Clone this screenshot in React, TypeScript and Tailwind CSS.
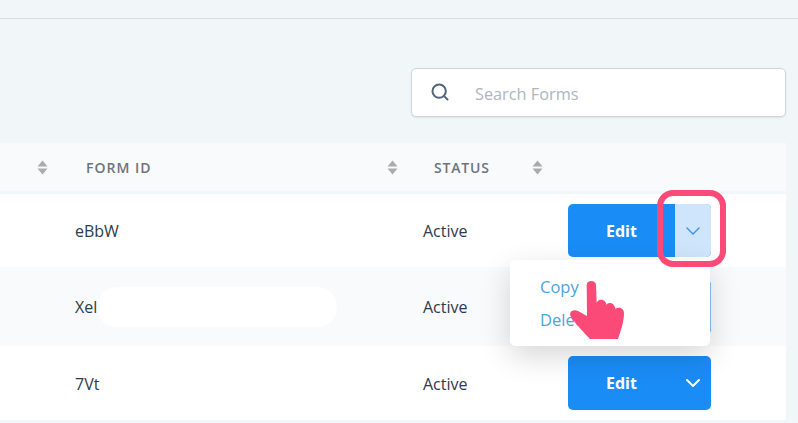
import React from "react";
import { Search, ChevronDown } from "lucide-react";

function SortIcon() {
  return (
    <svg width="11" height="15" viewBox="0 0 11 15" className="shrink-0">
      <path d="M5.5 0.5L10.5 6.5H0.5Z" fill="#a9abad" />
      <path d="M5.5 14.5L10.5 8.5H0.5Z" fill="#a9abad" />
    </svg>
  );
}

function EditButton({ open }: { open?: boolean }) {
  return (
    <div className={`flex w-[143px] overflow-hidden rounded-[5px] bg-[#1a8cf6] text-white ${open ? "h-[53px]" : "h-[54px]"}`}>
      <div className="flex w-[107px] items-center justify-center text-[16px] font-bold">Edit</div>
      <div
        className={`flex flex-1 items-center justify-center pr-[1px] ${open ? "bg-[#cfe5fb] text-[#3b8ff0]" : "text-white"}`}
      >
        <ChevronDown size={24} strokeWidth={open ? 1.4 : 2} />
      </div>
    </div>
  );
}

function Row({ id, striped, open, h, low }: { id: string; striped?: boolean; open?: boolean; h: string; low?: boolean }) {
  const text = `text-[16px] text-[#2f3a4a] ${low ? "pt-[2px]" : ""}`;
  return (
    <div className={`flex items-center ${h} ${striped ? "bg-[#f8fafc]" : "bg-white"}`}>
      <div className={`w-[423px] pl-[75px] ${text}`}>{id}</div>
      <div className={`w-[145px] ${text}`}>Active</div>
      <EditButton open={open} />
    </div>
  );
}

export default function App() {
  return (
    <div className="relative h-[423px] w-[798px] overflow-hidden bg-[#f1f6f9] font-['Open_Sans',sans-serif]">
      <div className="h-[19px] border-b border-[#d6dde2]" />

      <div className="flex justify-end pt-[49px] pr-[12px]">
        <div className="flex h-[49px] w-[375px] items-center rounded-[5px] border border-[#cdd5dd] bg-white pl-[19px] shadow-[0_1px_2px_rgba(0,0,0,0.08)]">
          <Search size={20} strokeWidth={2.4} className="-mt-[1px] -ml-[1px] text-[#52667a]" />
          <span className="ml-[25px] pt-[4px] text-[16.3px] text-[#aeb6bf]">Search Forms</span>
        </div>
      </div>

      <div className="mt-[26px] w-[786px]">
        <div className="flex h-[48px] items-center bg-[#f8fafc] text-[14px] font-semibold tracking-[1px] text-[#6c7480]">
          <div className="ml-[37px]">
            <SortIcon />
          </div>
          <span className="ml-[38px] w-[301px]">FORM ID</span>
          <SortIcon />
          <span className="ml-[36px] w-[98px] tracking-[0.8px]">STATUS</span>
          <SortIcon />
        </div>
        <div className="mt-[3px]">
          <Row id="eBbW" open h="h-[73px]" />
          <Row id="Xel" striped h="h-[79px]" />
          <Row id="7Vt" low h="h-[74px]" />
        </div>
      </div>

      {/* blanked out part of the form id */}
      <div className="absolute top-[287px] left-[97px] h-[40px] w-[240px] rounded-[20px] bg-white" />

      {/* row 2 button, only its edge shows past the menu */}
      <div className="absolute top-[280px] left-[568px] h-[54px] w-[143px] rounded-[5px] bg-[#8cc4f2]" />

      {/* dropdown menu */}
      <div className="absolute top-[260px] left-[510px] flex h-[86px] w-[200px] flex-col rounded-[5px] bg-white pt-[10px] pl-[30px] text-[16.5px] leading-[33px] text-[#4ba3dc] shadow-[0_10px_30px_rgba(0,0,0,0.16)]">
        <span>Copy</span>
        <span>Delete</span>
      </div>

      {/* highlight round the chevron */}
      <div className="absolute top-[190px] left-[657px] h-[77px] w-[69px] rounded-[16px] border-[6px] border-[#fc4a78]" />

      {/* pointing hand */}
      <svg width="57" height="60" viewBox="0 0 57 60" className="absolute top-[280px] left-[568px]">
        <path
          d="M18.7 5C18.7 -0.5 28 -0.5 28 5L28.7 23C30 18 38 19 38.5 25C40 22 46 22 47.5 29C50 26.5 56 28 56 33C56 42 53 50 50 59L22 59C15 52 8 44 3 37C0 32 5 29 10 31L19 36Z"
          fill="#fc4a78"
        />
      </svg>
    </div>
  );
}
